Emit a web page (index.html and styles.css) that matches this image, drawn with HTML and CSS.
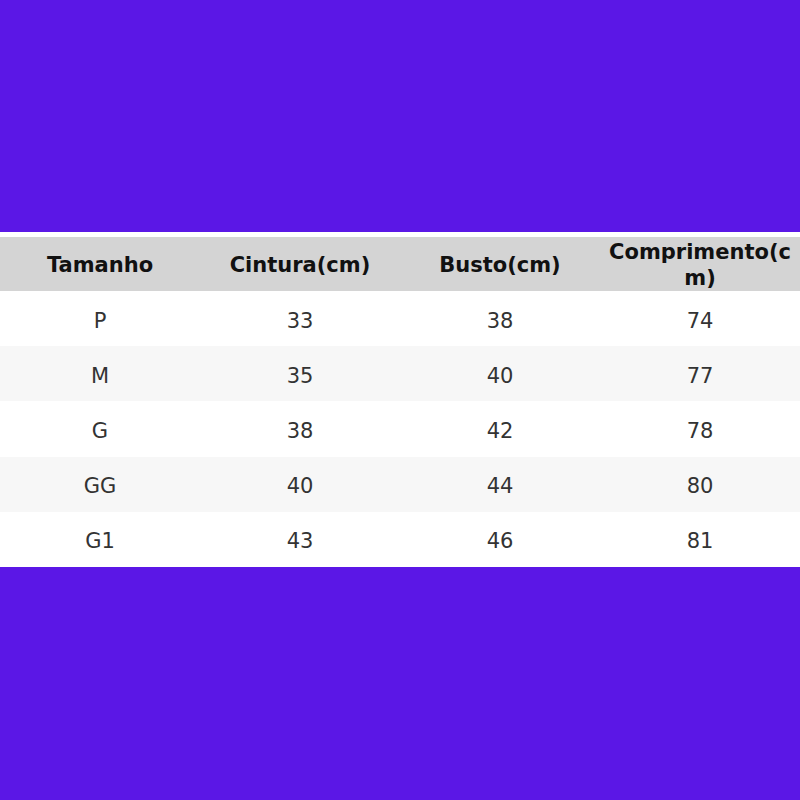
FILE: index.html
```html
<!DOCTYPE html>
<html>
<head>
<meta charset="utf-8">
<link rel="stylesheet" href="styles.css">
</head>
<body>
<div class="page">
  <table class="sizes">
    <thead>
      <tr><th>Tamanho</th><th>Cintura(cm)</th><th>Busto(cm)</th><th>Comprimento(cm)</th></tr>
    </thead>
    <tbody>
      <tr><td>P</td><td>33</td><td>38</td><td>74</td></tr>
      <tr><td>M</td><td>35</td><td>40</td><td>77</td></tr>
      <tr><td>G</td><td>38</td><td>42</td><td>78</td></tr>
      <tr><td>GG</td><td>40</td><td>44</td><td>80</td></tr>
      <tr><td>G1</td><td>43</td><td>46</td><td>81</td></tr>
    </tbody>
  </table>
</div>
</body>
</html>
```
FILE: styles.css
```css
html, body {
  margin: 0;
  padding: 0;
  background: #5b17e6;
}
.page {
  width: 800px;
  height: 800px;
  display: flex;
  flex-direction: column;
  justify-content: flex-start;
  padding-top: 232px;
  box-sizing: border-box;
}
.sizes {
  width: 800px;
  border-collapse: collapse;
  table-layout: fixed;
  background: #fff;
  border-top: 5px solid #fff;
  font-family: "DejaVu Sans", sans-serif;
  font-size: 21px;
}
.sizes th {
  background: #d4d4d4;
  color: #111;
  font-weight: bold;
  height: 53px;
  padding: 1px 5px 0;
  line-height: 26px;
  word-break: break-all;
  text-align: center;
}
.sizes td {
  height: 50.2px;
  padding: 5px 5px 0;
  text-align: center;
  color: #333;
  line-height: 25px;
}
.sizes tbody tr:nth-child(even) td {
  background: #f7f7f7;
}
```
